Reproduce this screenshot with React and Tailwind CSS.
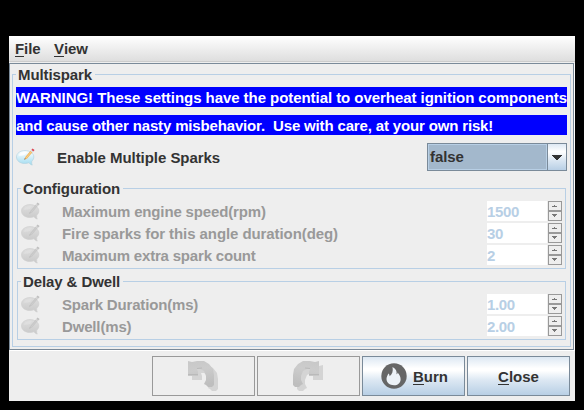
import React from 'react';

function NoteIcon({ disabled }) {
  const light = disabled ? '#dcdcdc' : '#f6fcfe';
  const dark = disabled ? '#c9c9c9' : '#9fdbf0';
  const edge = disabled ? '#d0d0d0' : '#b3d3e0';
  const id = disabled ? 'note-off' : 'note-on';
  return (
    <svg width="20" height="18" viewBox="0 0 20 18" className="block shrink-0">
      <defs>
        <linearGradient id={id} x1="0" y1="0" x2="0" y2="1">
          <stop offset="0.1" stopColor={light} />
          <stop offset="1" stopColor={dark} />
        </linearGradient>
      </defs>
      <path
        d="M9 2.600C4.300 2.600.500 5.200.500 9c0 3.800 3.600 6.500 8.300 6.500 1.600 0 3-.300 4.200-.800.700 1.100 1.700 2 3.200 2.400-.600-1.300-.700-2.600-.400-4 1.300-1.100 2-2.500 2-4.100C17.800 5.200 13.700 2.600 9 2.600z"
        fill={`url(#${id})`}
        stroke={edge}
        strokeWidth="0.7"
      />
      <path d="M2.500 7.500C4 4.500 8 3.500 11 4.200 10 7 6 8.500 2.500 7.500z" fill={disabled ? '#e0e0e0' : '#ffffff'} opacity="0.8" />
      <path d="M8.500 11.500l.8-2.500 5.200-6.200 2 1.500-5.400 6.100z" fill={disabled ? '#c6c6c6' : '#f0b35c'} />
      <path d="M10.300 9.800l5.200-6.200" stroke={disabled ? '#cfcfcf' : '#fbdc9c'} strokeWidth="0.8" />
      <path d="M8.300 11.700l.4-1.400 1 .8z" fill={disabled ? '#b5b5b5' : '#5c5450'} />
      <path d="M15.300 1.900l1.200-1.400 2.100 1.500-1.300 1.500z" fill={disabled ? '#c0c0c0' : '#dd4854'} />
      <path d="M14.400 3l.9-1.100 2 1.600-.9 1z" fill={disabled ? '#d2d2d2' : '#d5dde4'} />
    </svg>
  );
}

const TURN = 'M0 0l4 1 5-1h7l5 3 4 5 1 6v10l-2 2h-4l-2-2-2-1 2-4v-4l-2-5-4-2H9l1 3v4H0z';

function TurnIcon({ flip }) {
  const id = flip ? 'turn-right' : 'turn-left';
  const mirror = flip ? 'translate(26 0) scale(-1 1)' : undefined;
  return (
    <svg width="30" height="30" viewBox="0 0 30 30" className="mr-px block">
      <defs>
        <linearGradient id={id} x1="0" y1="0" x2="0.2" y2="1">
          <stop offset="0" stopColor="#c8c8c8" />
          <stop offset="0.4" stopColor="#cccccc" />
          <stop offset="1" stopColor="#bebebe" />
        </linearGradient>
      </defs>
      <g transform="translate(4 4)">
        <path d={TURN} fill="#d4d4d4" transform={mirror} />
      </g>
      <g transform={mirror}>
        <path d={TURN} fill={`url(#${id})`} />
        <path d="M0 13.500h10M9 7.500l5-.5" stroke="#bababa" fill="none" />
      </g>
    </svg>
  );
}

function FlameIcon() {
  return (
    <svg width="26" height="26" viewBox="0 0 26 26" className="block shrink-0">
      <circle cx="13" cy="13" r="12.7" fill="#666666" />
      <path
        d="M11.500 4c3.500 1.800 4.700 4.500 4 7.300.800-.400 1.100-1 1.100-1.900 2 2.200 3.200 4.600 3 7.300-.3 3.300-2.900 5.600-6.500 5.600-4.500 0-7.600-2.600-7.600-6.200 0-2.300 1.200-3.700 1.900-5.500.9.800 1.200 1.700 1.200 2.700 2.700-2.200 3.700-5.100 2.900-9.300z"
        fill="#edf2f7"
      />
    </svg>
  );
}

function Group({ title, className, children }) {
  return (
    <fieldset className={`relative m-0 min-w-0 border border-[#b8cfe5] ${className}`}>
      <div className="absolute -top-[9px] left-[3px] h-[18px] bg-[#eeeeee] pr-[3px] pl-[2px] leading-[18px] tracking-[-0.1px] text-[#333333] whitespace-nowrap">
        {title}
      </div>
      {children}
    </fieldset>
  );
}

function SpinButton({ down }) {
  return (
    <div className="flex h-[10px] w-[14px] items-center justify-center border border-[#999999]">
      <svg width="6" height="4" viewBox="0 0 6 4" shapeRendering="crispEdges">
        <path d={down ? 'M0 0h5v1h-1v1h-1v1h-1v-1h-1v-1h-1z' : 'M2 1h1v1h2v1h-5v-1h2z'} fill="#777777" />
      </svg>
    </div>
  );
}

function Field({ label, value, tracking }) {
  return (
    <div className="flex h-[20px] items-center">
      <NoteIcon disabled />
      <span className={`ml-[21px] flex-1 whitespace-nowrap pt-[2px] leading-[20px] text-[#999999] ${tracking}`}>{label}</span>
      <div className="h-[20px] w-[60px] bg-white leading-[22px] tracking-[-0.34px] text-[#b8cfe5]">{value}</div>
      <div className="ml-[1px] flex flex-col">
        <SpinButton />
        <SpinButton down />
      </div>
    </div>
  );
}

const buttonBase = 'flex h-[40px] w-[103px] items-center justify-center border';
const activeButton =
  'border-[#7a8a99] bg-[linear-gradient(180deg,#dde8f3_0%,#ffffff_30%,#ffffff_36%,#dde8f3_60%,#b8cfe5_100%)] text-[#333333]';

function Mnemonic({ text }) {
  return (
    <span className="flex">
      <span className="h-[17px] border-b border-[#333333] leading-[18px]">{text[0]}</span>
      <span className="leading-[18px]">{text.slice(1)}</span>
    </span>
  );
}

export default function App() {
  return (
    <div className="h-[410px] w-[584px] overflow-hidden bg-black pt-[36px] pl-[9px] font-['Liberation_Sans',Arial,sans-serif] text-[15px] font-bold">
      <div className="flex h-[365px] w-[566px] flex-col bg-[#eeeeee]">
        <div className="flex h-[26px] shrink-0 items-center gap-[13.5px] border-b border-[#cccccc] bg-linear-to-b from-white to-[#dedede] pl-[6px] tracking-[-0.1px] text-[#333333]">
          <Mnemonic text="File" />
          <Mnemonic text="View" />
        </div>
        <div className="mt-[1px] h-[287px] w-[565px] shrink-0 border border-[#7a8a99] pt-[10px] pl-[2px] shadow-[1px_1px_0_white]">
          <Group title="Multispark" className="h-[273px] w-[559px] pt-[12px] pl-[3px]">
            <div className="h-[20px] w-[551px] bg-[#0000ff] leading-[21px] tracking-[-0.055px] whitespace-pre text-white">
              WARNING! These settings have the potential to overheat ignition components
            </div>
            <div className="mt-[8px] h-[20px] w-[551px] bg-[#0000ff] leading-[21px] tracking-[-0.155px] whitespace-pre text-white">
              {'and cause other nasty misbehavior.  Use with care, at your own risk!'}
            </div>
            <div className="mt-[8px] flex h-[28px] w-[551px] items-center">
              <NoteIcon />
              <span className="ml-[21px] flex-1 pt-[2px] tracking-[-0.05px] text-[#333333]">Enable Multiple Sparks</span>
              <div className="flex h-[28px] w-[140px] border border-[#7a8a99]">
                <div className="flex-1 border border-[#b8cfe5] bg-[#a3b8cc] pl-[1px] leading-[24px] tracking-[-0.1px] text-[#333333]">false</div>
                <div className="flex w-[19px] items-center justify-center border-l border-[#7a8a99] bg-[linear-gradient(180deg,#dde8f3_0%,#ffffff_30%,#dde8f3_60%,#b8cfe5_100%)]">
                  <svg width="10" height="5" viewBox="0 0 10 5" shapeRendering="crispEdges">
                    <path d="M0 0h10v1h-1v1h-1v1h-1v1h-1v1h-2v-1h-1v-1h-1v-1h-1v-1h-1z" fill="#333333" />
                  </svg>
                </div>
              </div>
            </div>
            <Group title="Configuration" className="mt-[17px] ml-[1px] flex h-[81px] w-[549px] flex-col gap-[2px] pt-[12px] pr-[3px] pl-[3px]">
              <Field label="Maximum engine speed(rpm)" value="1500" tracking="tracking-[-0.15px]" />
              <Field label="Fire sparks for this angle duration(deg)" value="30" tracking="tracking-[-0.08px]" />
              <Field label="Maximum extra spark count" value="2" tracking="tracking-[-0.19px]" />
            </Group>
            <Group title="Delay &amp; Dwell" className="mt-[12px] ml-[1px] flex h-[59px] w-[549px] flex-col gap-[2px] pt-[12px] pr-[3px] pl-[3px]">
              <Field label="Spark Duration(ms)" value="1.00" tracking="tracking-[-0.17px]" />
              <Field label="Dwell(ms)" value="2.00" tracking="tracking-[-0.16px]" />
            </Group>
          </Group>
        </div>
        <div className="flex justify-end gap-[2px] pt-[6px] pr-[5px]">
          <div className={`${buttonBase} border-[#999999]`}>
            <TurnIcon />
          </div>
          <div className={`${buttonBase} border-[#999999]`}>
            <TurnIcon flip />
          </div>
          <div className={`${buttonBase} ${activeButton} gap-[6px] pl-[2px]`}>
            <FlameIcon />
            <div className="pt-[2px]">
              <Mnemonic text="Burn" />
            </div>
          </div>
          <div className={`${buttonBase} ${activeButton} pt-[2px]`}>
            <Mnemonic text="Close" />
          </div>
        </div>
      </div>
    </div>
  );
}
